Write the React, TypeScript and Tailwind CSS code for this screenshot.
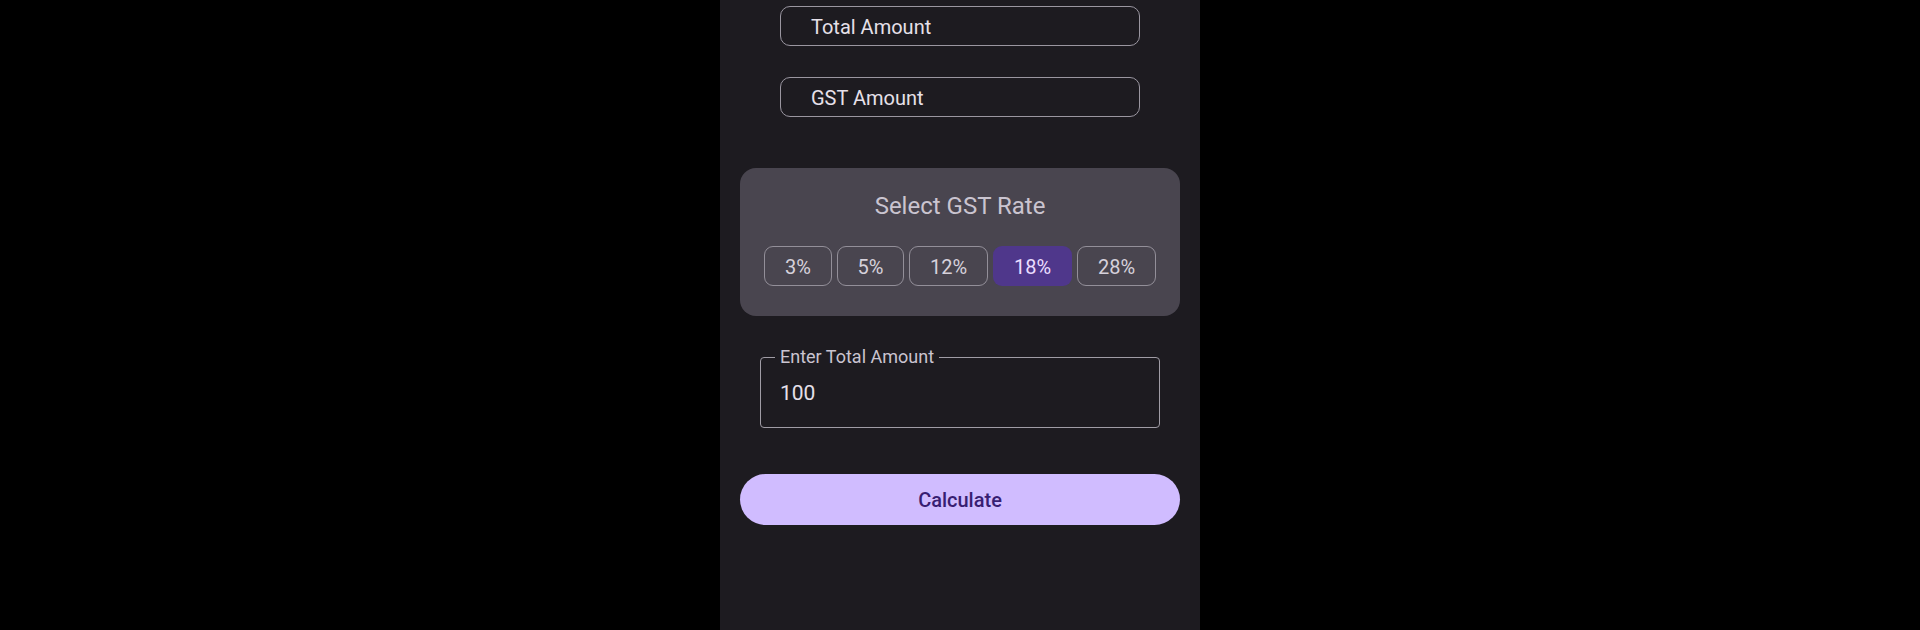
import React, { useState } from "react";

const rates = [
    { label: "3%", w: "w-[68px]" },
    { label: "5%", w: "w-[67px]" },
    { label: "12%", w: "w-[79px]" },
    { label: "18%", w: "w-[79px]" },
    { label: "28%", w: "w-[79px]" },
];

function ResultBox({ label, className }: { label: string; className?: string }) {
    return (
        <div
            className={`mx-[60px] flex h-[40px] items-center rounded-[10px] border border-[#9a96a0] pl-[30px] pt-[2px] text-[20px] text-[#e6e0e9] ${className ?? ""}`}
        >
            {label}
        </div>
    );
}

export default function App() {
    const [rate, setRate] = useState("18%");
    const [amount, setAmount] = useState("100");

    return (
        <div className="flex min-h-[630px] w-full justify-center bg-black" style={{ fontFamily: "Roboto, 'Noto Sans', sans-serif" }}>
            <div className="flex h-[630px] w-[480px] flex-col bg-[#1d1b20]">
                <ResultBox label="Total Amount" className="mt-[6px]" />
                <ResultBox label="GST Amount" className="mt-[31px]" />

                <div className="mx-[20px] mt-[51px] flex h-[148px] flex-col items-center rounded-[16px] bg-[#49454f] pt-[24px]">
                    <p className="text-[24px] leading-[28px] text-[#cac4d0]">Select GST Rate</p>
                    <div className="mt-[26px] flex gap-[5px]">
                        {rates.map((r) => (
                            <button
                                key={r.label}
                                onClick={() => setRate(r.label)}
                                className={`flex h-[40px] ${r.w} items-center justify-center rounded-[9px] pt-[1px] text-[20px] ${
                                    rate === r.label
                                        ? "bg-[#4f378b] text-[#eaddff]"
                                        : "border border-[#938f99] text-[#d6d1db]"
                                }`}
                            >
                                {r.label}
                            </button>
                        ))}
                    </div>
                </div>

                <fieldset className="mx-[40px] mt-[31px] h-[81px] rounded-[4px] border border-[#a09ca5] px-[14px]">
                    <legend className="px-[5px] text-[18px] leading-[20px] text-[#cac4d0]">Enter Total Amount</legend>
                    <input
                        value={amount}
                        onChange={(e) => setAmount(e.target.value)}
                        className="mt-[11px] w-full bg-transparent pl-[5px] text-[21px] text-[#e6e0e9] outline-none"
                    />
                </fieldset>

                <button className="mx-[20px] mt-[46px] h-[51px] rounded-full bg-[#d0bcff] text-[20px] font-medium text-[#381e72]">
                    Calculate
                </button>
            </div>
        </div>
    );
}
